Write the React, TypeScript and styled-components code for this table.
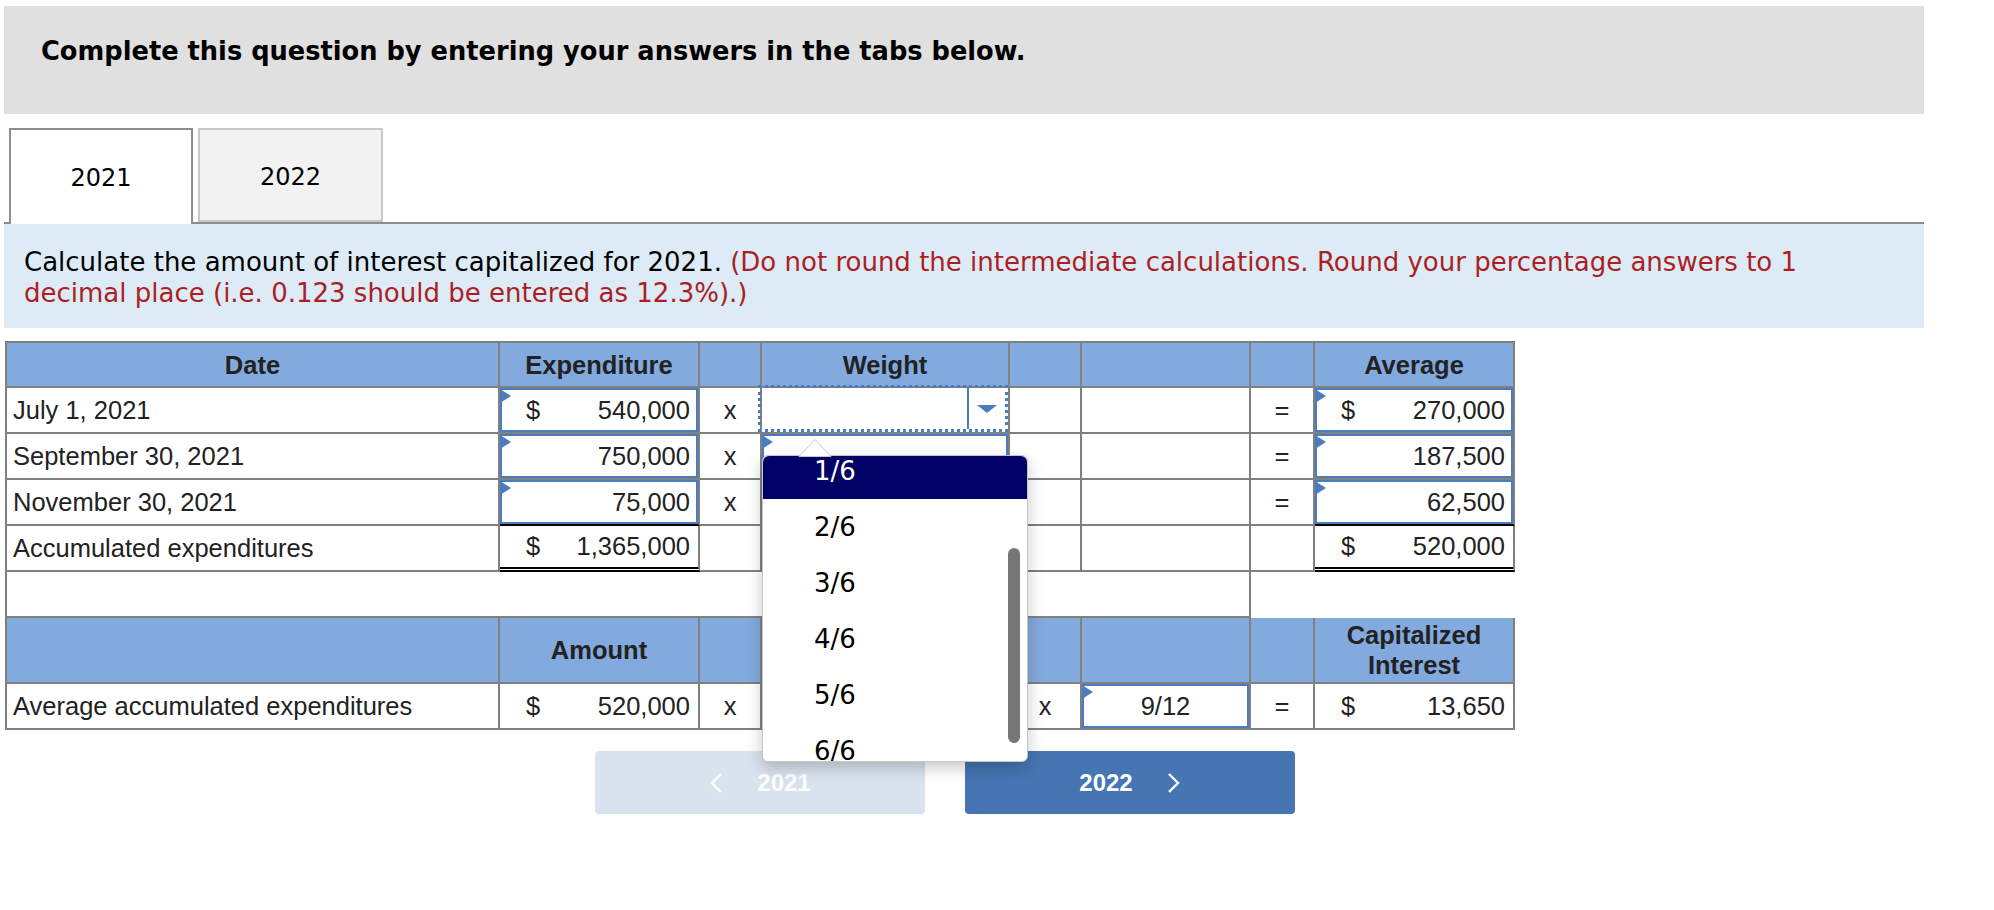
import React from "react";
import styled, { createGlobalStyle } from "styled-components";

const GlobalStyle = createGlobalStyle`
  *, *::before, *::after {
    box-sizing: border-box;
  }
  html, body {
    margin: 0;
    padding: 0;
    background: #ffffff;
  }
  body {
    font-family: "DejaVu Sans", Verdana, sans-serif;
    color: #000000;
  }
`;

const Page = styled.div`
  width: 1924px;
  padding: 6px 0 0 4px;
`;

const Banner = styled.div`
  height: 108px;
  padding: 30px 0 0 37px;
  background: #e0e0e0;
  font-size: 25.7px;
  line-height: 30px;
  font-weight: bold;
`;

const TabBar = styled.div`
  display: flex;
  align-items: flex-start;
  gap: 5px;
  height: 96px;
  margin-top: 14px;
  padding-left: 5px;
  border-bottom: 2px solid #8c8c8c;
`;

const Tab = styled.div<{ $active?: boolean }>`
  width: ${(p) => (p.$active ? 184 : 185)}px;
  height: ${(p) => (p.$active ? 96 : 94)}px;
  display: flex;
  align-items: center;
  justify-content: center;
  padding-top: ${(p) => (p.$active ? 2 : 4)}px;
  font-size: 24px;
  background: ${(p) => (p.$active ? "#ffffff" : "#f2f2f2")};
  border: 2px solid ${(p) => (p.$active ? "#8e8e8e" : "#c8c8c8")};
  border-bottom: ${(p) => (p.$active ? "none" : "2px solid #c8c8c8")};
`;

const Prompt = styled.div`
  height: 104px;
  padding: 23px 60px 0 20px;
  background: #ddebf7;
  font-size: 26px;
  line-height: 31px;
`;

const Note = styled.span`
  color: #ab1f24;
`;

const Grid = styled.table`
  margin: 13px 0 0 1px;
  border-collapse: separate;
  border-spacing: 0;
  table-layout: fixed;
  width: 1510px;
  font-family: "Liberation Sans", Arial, sans-serif;
  font-size: 25.5px;
  color: #222222;
`;

const Row = styled.tr<{ $h: number }>`
  height: ${(p) => p.$h}px;
`;

const Head = styled.th<{ $first?: boolean; $top?: boolean }>`
  padding: 0;
  background: #82aade;
  font-weight: bold;
  line-height: 30px;
  text-align: center;
  vertical-align: middle;
  border-right: 2px solid #808080;
  border-bottom: 2px solid #808080;
  border-left: ${(p) => (p.$first ? "2px solid #808080" : "none")};
  border-top: ${(p) => (p.$top ? "2px solid #808080" : "none")};
`;

const Cell = styled.td<{
  $first?: boolean;
  $under?: "black" | "double";
  $bare?: boolean;
}>`
  padding: 0 0 0 ${(p) => (p.$first ? 6 : 0)}px;
  text-align: ${(p) => (p.$first ? "left" : "center")};
  vertical-align: middle;
  white-space: nowrap;
  border-left: ${(p) => (p.$first ? "2px solid #808080" : "none")};
  border-right: ${(p) => (p.$bare ? "none" : "2px solid #808080")};
  border-bottom: ${(p) =>
    p.$bare
      ? "none"
      : p.$under === "black"
      ? "2px solid #000000"
      : p.$under === "double"
      ? "5px double #000000"
      : "2px solid #808080"};
`;

const AnchorCell = styled(Cell)`
  position: relative;
`;

const Field = styled.div<{ $center?: boolean }>`
  position: relative;
  height: 44px;
  display: flex;
  align-items: center;
  justify-content: ${(p) => (p.$center ? "center" : "space-between")};
  padding: ${(p) => (p.$center ? "0" : "0 6px 0 24px")};
  border: 2px solid #4a7cbf;
`;

const Amount = styled.div`
  display: flex;
  align-items: center;
  justify-content: space-between;
  padding: 0 8px 0 26px;
`;

const Marker = styled.span`
  position: absolute;
  top: -1px;
  left: -2px;
  width: 0;
  height: 0;
  border-left: 11px solid #4a7cbf;
  border-top: 7px solid transparent;
  border-bottom: 7px solid transparent;
`;

const Select = styled.div`
  display: flex;
  justify-content: flex-end;
  width: calc(100% + 4px);
  height: 47px;
  margin: -3px 0 0 -4px;
  border: 3px dotted #4a7cbf;
`;

const ArrowZone = styled.div`
  width: 38px;
  display: flex;
  align-items: center;
  justify-content: center;
  border-left: 2px solid #4a7cbf;
`;

const DownArrow = styled.span`
  width: 0;
  height: 0;
  border-top: 8px solid #4a7cbf;
  border-left: 10px solid transparent;
  border-right: 10px solid transparent;
`;

const Popup = styled.div`
  position: absolute;
  top: 67px;
  left: 0;
  z-index: 5;
  width: 266px;
  height: 307px;
  background: #ffffff;
  border: 1px solid #c6c6c6;
  border-radius: 6px;
  box-shadow: 0 6px 16px rgba(0, 0, 0, 0.22);
  font-family: "DejaVu Sans", Verdana, sans-serif;
  font-size: 26px;
  color: #000000;
  text-align: left;
`;

const Caret = styled.svg`
  position: absolute;
  top: -18px;
  left: 35px;
`;

const Viewport = styled.div`
  height: 100%;
  overflow: hidden;
  border-radius: 6px;
`;

const OptionList = styled.div`
  margin-top: -13px;
`;

const Option = styled.div<{ $active?: boolean }>`
  height: 56px;
  line-height: 56px;
  padding-left: 51px;
  background: ${(p) => (p.$active ? "#000066" : "transparent")};
  color: ${(p) => (p.$active ? "#ffffff" : "#000000")};
`;

const Thumb = styled.div`
  position: absolute;
  top: 92px;
  left: 245px;
  width: 12px;
  height: 195px;
  border-radius: 6px;
  background: #767676;
`;

const NavRow = styled.div`
  display: flex;
  gap: 40px;
  margin: 21px 0 0 591px;
`;

const NavButton = styled.div<{ $dim?: boolean }>`
  width: 330px;
  height: 63px;
  display: flex;
  align-items: center;
  justify-content: center;
  gap: 34px;
  border-radius: 4px;
  background: ${(p) => (p.$dim ? "#d9e3ef" : "#4675b3")};
  color: #ffffff;
  font-family: "Liberation Sans", Arial, sans-serif;
  font-size: 24px;
  font-weight: bold;
`;

const Chevron = ({ dir }: { dir: "left" | "right" }) => (
  <svg width="14" height="22" viewBox="0 0 14 22">
    <polyline
      points={dir === "left" ? "12,2 3,11 12,20" : "2,2 11,11 2,20"}
      fill="none"
      stroke="#ffffff"
      strokeWidth="2.4"
    />
  </svg>
);

const Money = ({ value, sign }: { value: string; sign?: boolean }) => (
  <>
    <span>{sign ? "$" : ""}</span>
    <span>{value}</span>
  </>
);

const options = ["1/6", "2/6", "3/6", "4/6", "5/6", "6/6"];

const rows = [
  { date: "July 1, 2021", exp: "540,000", avg: "270,000", sign: true },
  { date: "September 30, 2021", exp: "750,000", avg: "187,500", sign: false },
  { date: "November 30, 2021", exp: "75,000", avg: "62,500", sign: false },
];

function App() {
  return (
    <Page>
      <GlobalStyle />
      <Banner>Complete this question by entering your answers in the tabs below.</Banner>
      <TabBar>
        <Tab $active>2021</Tab>
        <Tab>2022</Tab>
      </TabBar>
      <Prompt>
        Calculate the amount of interest capitalized for 2021.{" "}
        <Note>
          (Do not round the intermediate calculations. Round your percentage
          answers to 1 decimal place (i.e. 0.123 should be entered as 12.3%).)
        </Note>
      </Prompt>

      <Grid>
        <colgroup>
          <col style={{ width: 495 }} />
          <col style={{ width: 200 }} />
          <col style={{ width: 62 }} />
          <col style={{ width: 248 }} />
          <col style={{ width: 72 }} />
          <col style={{ width: 169 }} />
          <col style={{ width: 64 }} />
          <col style={{ width: 200 }} />
        </colgroup>
        <tbody>
          <Row $h={47}>
            <Head $first $top>Date</Head>
            <Head $top>Expenditure</Head>
            <Head $top />
            <Head $top>Weight</Head>
            <Head $top />
            <Head $top />
            <Head $top />
            <Head $top>Average</Head>
          </Row>
          {rows.map((r, i) => (
            <Row $h={46} key={r.date}>
              <Cell $first>{r.date}</Cell>
              <Cell $under={i === 2 ? "black" : undefined}>
                <Field>
                  <Marker />
                  <Money value={r.exp} sign={r.sign} />
                </Field>
              </Cell>
              <Cell>x</Cell>
              {i === 0 ? (
                <AnchorCell>
                  <Select>
                    <ArrowZone>
                      <DownArrow />
                    </ArrowZone>
                  </Select>
                  <Popup>
                    <Caret width="34" height="19" viewBox="0 0 34 19">
                      <polygon
                        points="1,18.5 17,1.5 33,18.5"
                        fill="#ffffff"
                        stroke="#c8c8c8"
                        strokeWidth="1"
                      />
                    </Caret>
                    <Viewport>
                      <OptionList>
                        {options.map((o, k) => (
                          <Option key={o} $active={k === 0}>
                            {o}
                          </Option>
                        ))}
                      </OptionList>
                    </Viewport>
                    <Thumb />
                  </Popup>
                </AnchorCell>
              ) : (
                <Cell>
                  <Field>
                    <Marker />
                  </Field>
                </Cell>
              )}
              <Cell />
              <Cell />
              <Cell>=</Cell>
              <Cell $under={i === 2 ? "black" : undefined}>
                <Field>
                  <Marker />
                  <Money value={r.avg} sign={r.sign} />
                </Field>
              </Cell>
            </Row>
          ))}
          <Row $h={46}>
            <Cell $first>Accumulated expenditures</Cell>
            <Cell $under="double">
              <Amount>
                <Money value="1,365,000" sign />
              </Amount>
            </Cell>
            <Cell />
            <Cell />
            <Cell />
            <Cell />
            <Cell />
            <Cell $under="double">
              <Amount>
                <Money value="520,000" sign />
              </Amount>
            </Cell>
          </Row>
          <Row $h={46}>
            <Cell $first colSpan={6} />
            <Cell $bare colSpan={2} />
          </Row>
          <Row $h={66}>
            <Head $first />
            <Head>Amount</Head>
            <Head />
            <Head />
            <Head />
            <Head />
            <Head />
            <Head>
              Capitalized
              <br />
              Interest
            </Head>
          </Row>
          <Row $h={46}>
            <Cell $first>Average accumulated expenditures</Cell>
            <Cell>
              <Amount>
                <Money value="520,000" sign />
              </Amount>
            </Cell>
            <Cell>x</Cell>
            <Cell>
              <Field>
                <Marker />
              </Field>
            </Cell>
            <Cell>x</Cell>
            <Cell>
              <Field $center>
                <Marker />
                9/12
              </Field>
            </Cell>
            <Cell>=</Cell>
            <Cell>
              <Amount>
                <Money value="13,650" sign />
              </Amount>
            </Cell>
          </Row>
        </tbody>
      </Grid>

      <NavRow>
        <NavButton $dim>
          <Chevron dir="left" />
          2021
        </NavButton>
        <NavButton>
          2022
          <Chevron dir="right" />
        </NavButton>
      </NavRow>
    </Page>
  );
}

export default App;
